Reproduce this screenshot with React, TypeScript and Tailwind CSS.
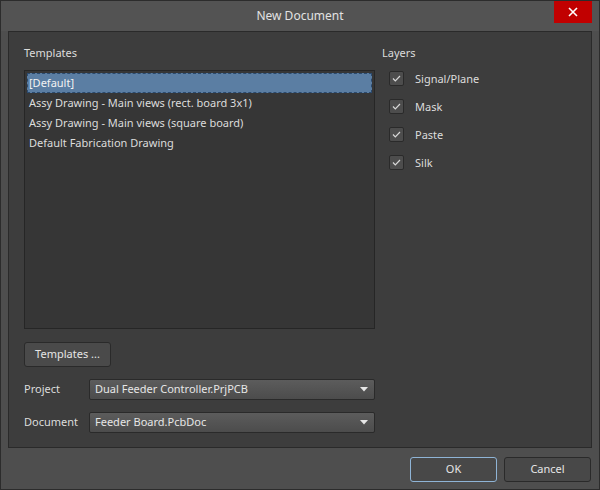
const templates = [
  '[Default]',
  'Assy Drawing - Main views (rect. board 3x1)',
  'Assy Drawing - Main views (square board)',
  'Default Fabrication Drawing',
];

const layers = ['Signal/Plane', 'Mask', 'Paste', 'Silk'];

function Check() {
  return (
    <div className="w-[15px] h-[15px] rounded-[2px] border border-[#2a2a2a] bg-[#4d4d4d] flex items-center justify-center">
      <svg width="9" height="7" viewBox="0 0 9 7" fill="none" stroke="#d8d8d8" strokeWidth="1.2">
        <path d="M1 3.5l2.3 2.3L8 1" />
      </svg>
    </div>
  );
}

function Combo({ value }: { value: string }) {
  return (
    <div className="flex-1 h-[21px] rounded-[2px] border border-[#2a2a2a] bg-gradient-to-b from-[#5c5c5c] to-[#4c4c4c] flex items-center pl-[5px] pr-[6px]">
      <span className="flex-1 text-[#e6e6e6]">{value}</span>
      <svg width="8" height="5" viewBox="0 0 8 5">
        <path d="M0 0h8L4 4.5z" fill="#e6e6e6" />
      </svg>
    </div>
  );
}

export default function App() {
  return (
    <div
      className="w-[600px] h-[490px] bg-[#4e4e4e] border border-[#2c2c2c] flex flex-col text-[11px] text-[#dcdcdc]"
      style={{ fontFamily: '"Noto Sans", "Open Sans", sans-serif' }}
    >
      <div className="relative h-[30px] bg-[#535353] flex items-center justify-center">
        <span className="text-[12px] text-[#e2e2e2]">New Document</span>
        <button className="absolute right-[7px] top-0 w-[38px] h-[22px] bg-[#c10000] flex items-center justify-center">
          <svg width="10" height="10" viewBox="0 0 10 10" stroke="#ffffff" strokeWidth="1.6">
            <path d="M1 1l8 8M9 1l-8 8" />
          </svg>
        </button>
      </div>

      <div className="mx-[7px] h-[417px] border border-[#2a2a2a] bg-[#3d3d3d] flex gap-[7px] pl-[15px] pr-[8px] pt-[14px]">
        <div className="w-[351px] flex flex-col">
          <div className="h-[14px] leading-[14px]">Templates</div>
          <div className="mt-[10px] h-[259px] border border-[#262626] bg-[#363636] p-[2px] flex flex-col">
            {templates.map((t, i) => (
              <div
                key={t}
                className={`h-[20px] flex items-center px-[1px] ${
                  i === 0 ? 'bg-[#5b7ea3] border border-dashed border-[#2b4a6e] text-[#f2f2f2]' : 'border border-transparent'
                }`}
              >
                {t}
              </div>
            ))}
          </div>
          <button className="mt-[13px] w-[87px] h-[25px] rounded-[3px] border border-[#2a2a2a] bg-[#4a4a4a] text-[#e6e6e6]">
            Templates ...
          </button>
          <div className="mt-[12px] flex items-center">
            <span className="w-[65px]">Project</span>
            <Combo value="Dual Feeder Controller.PrjPCB" />
          </div>
          <div className="mt-[12px] flex items-center">
            <span className="w-[65px]">Document</span>
            <Combo value="Feeder Board.PcbDoc" />
          </div>
        </div>
        <div className="flex-1 flex flex-col">
          <div className="h-[14px] leading-[14px]">Layers</div>
          <div className="mt-[11px] pl-[7px] flex flex-col gap-[13px]">
            {layers.map((l) => (
              <div key={l} className="h-[15px] flex items-center gap-[11px]">
                <Check />
                <span className="leading-[15px]">{l}</span>
              </div>
            ))}
          </div>
        </div>
      </div>

      <div className="flex-1 flex items-center justify-end gap-[7px] pr-[8px] pt-[2px]">
        <button className="w-[87px] h-[25px] rounded-[3px] border border-[#8fb4d6] bg-[#484848] text-[#e6e6e6]">
          OK
        </button>
        <button className="w-[87px] h-[25px] rounded-[3px] border border-[#2a2a2a] bg-[#484848] text-[#e6e6e6]">
          Cancel
        </button>
      </div>
    </div>
  );
}
